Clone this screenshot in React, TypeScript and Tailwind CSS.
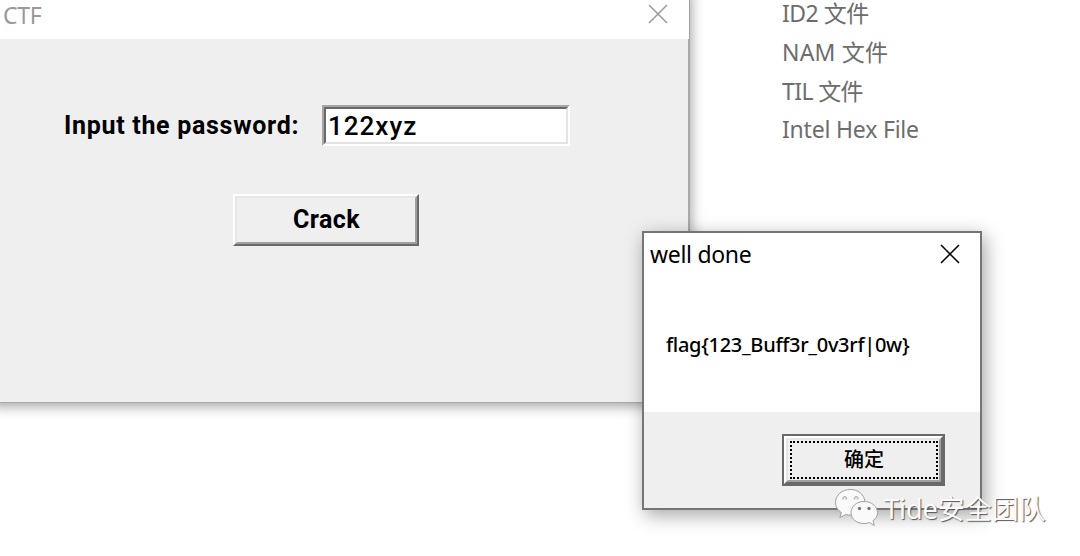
import React from "react";

const UI = "font-['Noto_Sans','Noto_Sans_CJK_SC',sans-serif]";

function CloseIcon({ className }: { className: string }) {
  return (
    <svg className={className} width="20" height="20" viewBox="0 0 20 20" fill="none" stroke="currentColor">
      <path d="M1 1L19 19M19 1L1 19" />
    </svg>
  );
}

const fileTypes = [
  { label: "ID2 文件", tracking: "tracking-[-0.5px]" },
  { label: "NAM 文件", tracking: "tracking-[0.2px]" },
  { label: "TIL 文件", tracking: "tracking-[-0.6px]" },
  { label: "Intel Hex File", tracking: "tracking-[-0.2px]" },
];

function FileList() {
  return (
    <ul className="absolute left-[782px] top-[-6px] text-[#6d6d6d]">
      {fileTypes.map((t) => (
        <li key={t.label} className={`h-[38.8px] whitespace-nowrap text-[23px] leading-[38.8px] ${t.tracking}`}>
          {t.label}
        </li>
      ))}
    </ul>
  );
}

function MainWindow() {
  return (
    <section className="absolute left-[-10px] top-[-10px] flex h-[413px] w-[700px] flex-col bg-[#efefef] shadow-[1px_3px_12px_rgba(0,0,0,0.38)]">
      <header className="flex h-[49px] shrink-0 items-center justify-between border-r border-[#a0a0a0] bg-white pl-[13px] pr-[21px] pt-[10px]">
        <span className="-mt-[10px] text-[23px] leading-[30px] tracking-[-0.3px] text-[#999]">CTF</span>
        <CloseIcon className="mb-[11px] text-[#999] stroke-[1.5]" />
      </header>
      <div className="flex flex-1 flex-col border-b border-r-2 border-[#a9a9a9] pl-[10px] pt-[66px] font-['Roboto',sans-serif]">
        <div className="flex h-[41px] items-center">
          <label className="ml-[64px] w-[258px] whitespace-nowrap text-[25px] font-bold leading-[36px] tracking-[0.7px] text-black">
            Input the password:
          </label>
          <div className="h-[41px] w-[248px] border-2 border-b-white border-l-[#a5a5a5] border-r-white border-t-[#a5a5a5]">
            <div className="flex h-full items-center border-2 border-b-[#e3e3e3] border-l-[#696969] border-r-[#e3e3e3] border-t-[#696969] bg-white pl-[2px] pt-[2px] text-[26px] font-medium tracking-[1px] text-black">
              122xyz
            </div>
          </div>
        </div>
        <button className="ml-[233px] mt-[48px] h-[52px] w-[186px] border-2 border-b-[#696969] border-l-white border-r-[#696969] border-t-white">
          <span className="flex h-full items-center justify-center border-2 border-b-[#a0a0a0] border-l-[#e6e6e6] border-r-[#a0a0a0] border-t-[#e6e6e6] pl-px text-[25px] font-bold tracking-[0.4px] text-black">
            Crack
          </span>
        </button>
      </div>
    </section>
  );
}

function MessageDialog() {
  return (
    <section className="absolute left-[642px] top-[231px] flex h-[279px] w-[340px] flex-col border-2 border-[#757575] bg-white shadow-[3px_5px_18px_rgba(0,0,0,0.36)]">
      <header className="flex h-[44px] items-center justify-between pl-[6px] pr-[20px]">
        <span className="-mt-[2px] whitespace-nowrap text-[23px] leading-[44px] tracking-[-0.3px] text-black">well done</span>
        <CloseIcon className="mb-[2px] text-black stroke-[1.5]" />
      </header>
      <div className="flex h-[135px] items-start pl-[22px] pt-[53px]">
        <span className="whitespace-nowrap text-[20px] font-medium leading-[30px] tracking-[-0.3px] text-black">
          {"flag{123_Buff3r_0v3rf|0w}"}
        </span>
      </div>
      <footer className="flex flex-1 items-start justify-end bg-[#efefef] pr-[35px] pt-[22px]">
        <button className="h-[52px] w-[163px] border-2 border-[#696969]">
          <span className="block h-full border-2 border-b-[#696969] border-l-white border-r-[#696969] border-t-white">
            <span className="block h-full border-2 border-b-[#a0a0a0] border-l-[#e6e6e6] border-r-[#a0a0a0] border-t-[#e6e6e6] pb-[1px] pl-[2px] pr-[1px] pt-px">
              <span className="flex h-full items-center justify-center border-2 border-dotted border-black text-[20px] font-medium text-black">
                确定
              </span>
            </span>
          </span>
        </button>
      </footer>
    </section>
  );
}

function Watermark() {
  return (
    <div className="absolute left-[834px] top-[488px] flex items-start">
      <svg width="46" height="40" viewBox="0 0 46 40" fill="#fafafa" stroke="#a0a0a0" strokeWidth="1">
        <path d="M16.500 1.500C8 1.500 1.500 7 1.500 14.500C1.500 18.800 3.700 22.200 7.500 24.500L5.800 29.500L11.800 26.500C13.500 27 16 27.300 18 27C17 19.500 23.500 13.500 31 13.300C30 6.500 24 1.500 16.500 1.500Z" />
        <path d="M30 13.500C22.500 13.500 17 18.500 17 24.700C17 31 22.800 35.500 30 35.500C32 35.500 33.700 35.200 35.500 34.500L40.300 37.500L39 32.700C42 30.700 43.500 28 43.500 24.700C43.500 18.500 37.500 13.500 30 13.500Z" />
        <path d="M9 11.500A2 2 0 1 1 12.500 11.500M20.500 11.500A2 2 0 1 1 24 11.500" fill="#e0e0e0" />
        <circle cx="25.500" cy="20.500" r="1.700" fill="#777" stroke="none" />
        <circle cx="35" cy="20.500" r="1.700" fill="#777" stroke="none" />
      </svg>
      <span className="ml-[4px] mt-[1px] whitespace-nowrap text-[27px] leading-[40px] text-[#fcfcfc] [text-shadow:1px_1px_1px_#555]">
        Tide安全团队
      </span>
    </div>
  );
}

export default function App() {
  return (
    <main className={`relative h-[556px] w-[1080px] overflow-hidden bg-white ${UI}`}>
      <FileList />
      <MainWindow />
      <MessageDialog />
      <Watermark />
    </main>
  );
}
